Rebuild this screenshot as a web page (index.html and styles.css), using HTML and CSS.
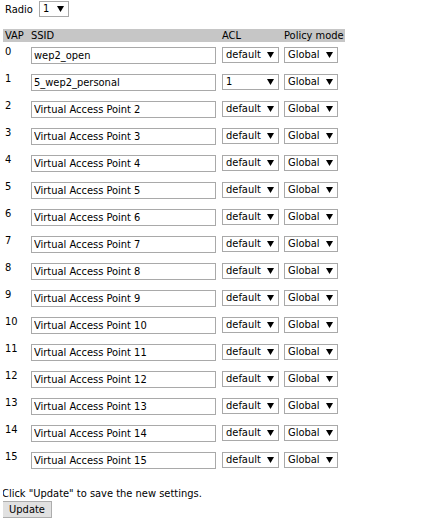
FILE: index.html
```html
<!DOCTYPE html>
<html>
<head>
<meta charset="utf-8">
<link rel="stylesheet" href="styles.css">
</head>
<body>
<div class="radio-row">
  <span class="label">Radio</span>
  <span class="sel sel-radio"><span class="val">1</span><svg class="arr" width="7" height="6" viewBox="0 0 7 6"><polygon points="0,0 7,0 3.5,6" fill="#000"/></svg></span>
</div>
<table class="vap-table">
  <thead>
    <tr><th class="c-vap">VAP</th><th class="c-ssid">SSID</th><th class="c-acl">ACL</th><th class="c-pol">Policy mode</th></tr>
  </thead>
  <tbody id="rows"></tbody>
</table>
<p class="hint">Click "Update" to save the new settings.</p>
<button class="btn">Update</button>
<script src="app.js"></script>
</body>
</html>
```
FILE: app.js
```js
const names = ["wep2_open", "5_wep2_personal"];
for (let i = 2; i < 16; i++) names.push("Virtual Access Point " + i);
const tri = '<svg class="arr" width="7" height="6" viewBox="0 0 7 6"><polygon points="0,0 7,0 3.5,6" fill="#000"/></svg>';
const body = document.getElementById("rows");
names.forEach((n, i) => {
  const acl = i === 1 ? "1" : "default";
  const tr = document.createElement("tr");
  tr.innerHTML =
    '<td class="c-vap">' + i + '</td>' +
    '<td class="c-ssid"><input class="ssid" type="text" value="' + n + '"></td>' +
    '<td class="c-acl"><span class="sel sel-acl"><span class="val">' + acl + '</span>' + tri + '</span></td>' +
    '<td class="c-pol"><span class="sel sel-pol"><span class="val">Global</span>' + tri + '</span></td>';
  body.appendChild(tr);
});
```
FILE: styles.css
```css
html, body {
  background: #fff;
}
body {
  margin: 1px 3px;
  font-family: "DejaVu Sans Condensed", "DejaVu Sans", sans-serif;
  font-stretch: condensed;
  font-size: 11px;
  color: #000;
}
.radio-row {
  display: flex;
  align-items: center;
  height: 16px;
}
.label {
  margin-left: 2px;
  width: 34px;
}
.sel {
  display: inline-flex;
  align-items: center;
  justify-content: space-between;
  box-sizing: border-box;
  height: 16px;
  border: 1px solid #a9a9a9;
  background: #fff;
  padding: 0 4px 0 3px;
  line-height: 14px;
}
.sel .arr {
  flex: none;
}
.sel-radio { width: 30px; }
.sel-acl { width: 57px; }
.sel-pol { width: 54px; }
.vap-table {
  margin-top: 12px;
  border-collapse: collapse;
  width: 342px;
}
.vap-table th {
  background: #c6c6c6;
  font-weight: normal;
  text-align: left;
  padding: 0 0 0 2px;
  height: 13px;
  line-height: 13px;
}
.vap-table td {
  vertical-align: top;
  padding: 3px 0 0 2px;
  height: 24px;
  line-height: 13px;
}
.c-vap { width: 24px; }
.c-ssid { width: 189px; }
.c-acl { width: 60px; }
.ssid {
  box-sizing: border-box;
  width: 185px;
  height: 17px;
  margin: 2px 0 0 0;
  border: 1px solid #a9a9a9;
  padding: 0 2px;
  font: inherit;
  color: #000;
  outline: none;
}
.sel-acl, .sel-pol { margin-top: 2px; }
.hint {
  margin: 13px 0 1px -1px;
  line-height: 13px;
}
.btn {
  font: inherit;
  margin-left: -1px;
  width: 50px;
  height: 17px;
  padding: 0;
  border: 1px solid #adadad;
  background: #e1e1e1;
  color: #000;
  border-radius: 0;
}
```
